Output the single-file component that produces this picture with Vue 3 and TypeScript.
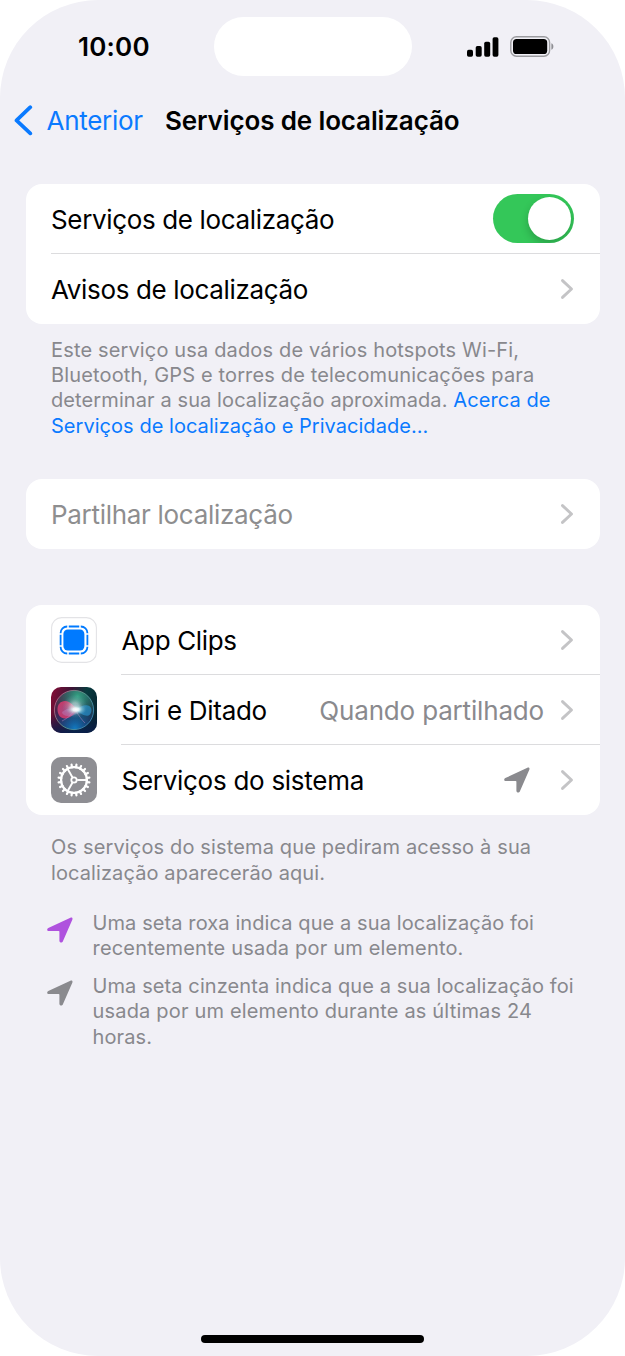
<script setup lang="ts">
interface Line {
  text: string
  wide?: boolean
}
interface Note {
  color: string
  lines: Line[]
}

const intro: string[] = [
  'Este serviço usa dados de vários hotspots Wi-Fi,',
  'Bluetooth, GPS e torres de telecomunicações para',
]

const notes: Note[] = [
  {
    color: 'purple',
    lines: [
      { text: 'Uma seta roxa indica que a sua localização foi' },
      { text: 'recentemente usada por um elemento.', wide: true },
    ],
  },
  {
    color: 'gray',
    lines: [
      { text: 'Uma seta cinzenta indica que a sua localização foi' },
      { text: 'usada por um elemento durante as últimas 24', wide: true },
      { text: 'horas.' },
    ],
  },
]

const arrowPath =
  'M1.3 11.1 23.4.7c1.5-.7 2.6.5 1.9 2L15.8 24.4c-.8 1.800-3.400 1.400-3.400-.7v-9c0-.5-.2-.7-.7-.7H2C-.1 14-.5 12 1.300 11.100z'
const teeth: number[] = Array.from({ length: 20 }, (_, i) => i * 18 + 9)
const spokes: number[] = [0, 120, 240]
</script>

<template>
  <div class="screen">
    <header class="status">
      <span class="time">10:00</span>
      <div class="island"></div>
      <div class="indicators">
        <svg class="signal" width="32" height="20" viewBox="0 0 32 20">
          <rect x="0" y="12.7" width="6" height="7" rx="1.7" />
          <rect x="8.7" y="9" width="6" height="10.7" rx="1.7" />
          <rect x="17.2" y="4.7" width="6" height="15" rx="1.7" />
          <rect x="25.6" y="0.2" width="5.8" height="19.5" rx="1.7" />
        </svg>
        <svg class="battery" width="44" height="21" viewBox="0 0 44 21">
          <rect x="0.8" y="0.8" width="38.8" height="19.4" rx="5.6" fill="none" stroke="#9b9b9f" stroke-width="1.4" />
          <rect x="3" y="3" width="34.2" height="15" rx="3.6" fill="#000" />
          <path d="M41.4 7.2c2.6.9 2.6 5.7 0 6.6z" fill="#8e8e93" />
        </svg>
      </div>
    </header>

    <nav class="nav">
      <svg class="back" width="20" height="32" viewBox="0 0 20 32">
        <path d="M17.3 2.2 3.5 15.400l13.800 13" />
      </svg>
      <span class="prev">Anterior</span>
      <h1>Serviços de localização</h1>
    </nav>

    <main>
      <section class="card">
        <div class="row">
          <span class="label">Serviços de localização</span>
          <span class="switch"><span class="knob"></span></span>
        </div>
        <div class="row divided">
          <span class="label">Avisos de localização</span>
          <svg class="chev" viewBox="0 0 14 22"><path d="m2.5 2.6 9 8.4-9 8.4" /></svg>
        </div>
      </section>
      <p class="foot intro">
        <span v-for="line in intro" :key="line" class="line medium">{{ line }}</span>
        <span class="line">determinar a sua localização aproximada. <a>Acerca de</a></span>
        <a class="line tight">Serviços de localização e Privacidade...</a>
      </p>

      <section class="card share">
        <div class="row">
          <span class="label muted">Partilhar localização</span>
          <svg class="chev" viewBox="0 0 14 22"><path d="m2.5 2.6 9 8.4-9 8.4" /></svg>
        </div>
      </section>

      <section class="card apps">
        <div class="row">
          <svg class="icon" viewBox="0 0 46 46">
            <rect x="0.6" y="0.6" width="44.8" height="44.8" rx="10" fill="#fff" stroke="#e3e3e6" stroke-width="1.1" />
            <rect x="12.4" y="12.5" width="21" height="21" rx="4.4" fill="#007aff" />
            <rect x="9.6" y="9.5" width="26.8" height="27" rx="6.5" fill="none" stroke="#007aff" stroke-width="1.8" />
            <path d="M17 8v3.200M29 8v3.200M17 35v3.200M29 35v3.200M8 17h3.200M8 29h3.200M34.800 17H38M34.800 29H38" stroke="#fff" stroke-width="1.500" />
          </svg>
          <span class="label">App Clips</span>
          <svg class="chev" viewBox="0 0 14 22"><path d="m2.5 2.6 9 8.4-9 8.4" /></svg>
        </div>
        <div class="row divided inset">
          <svg class="icon" viewBox="0 0 46 46">
            <defs>
              <linearGradient id="siriBase" x1="0" y1="0.3" x2="1" y2="0.6">
                <stop offset="0" stop-color="#7b0e35" />
                <stop offset="0.35" stop-color="#3a1536" />
                <stop offset="0.65" stop-color="#083b3e" />
                <stop offset="1" stop-color="#062330" />
              </linearGradient>
              <linearGradient id="siriShade" x1="0" y1="0" x2="0" y2="1">
                <stop offset="0.6" stop-color="#0a1c4d" stop-opacity="0" />
                <stop offset="1" stop-color="#0a1c4d" stop-opacity="0.85" />
              </linearGradient>
              <radialGradient id="siriGreen" cx="0.58" cy="0.2" r="0.58">
                <stop offset="0" stop-color="#35a283" />
                <stop offset="1" stop-color="#1b7465" stop-opacity="0" />
              </radialGradient>
              <radialGradient id="siriBlue" cx="0.52" cy="0.9" r="0.6">
                <stop offset="0" stop-color="#127ac0" />
                <stop offset="1" stop-color="#123c7b" stop-opacity="0" />
              </radialGradient>
              <radialGradient id="siriPink" cx="0.35" cy="0.5" r="0.7">
                <stop offset="0" stop-color="#bd4a83" />
                <stop offset="1" stop-color="#ea3263" />
              </radialGradient>
              <radialGradient id="siriGlow">
                <stop offset="0" stop-color="#fff" />
                <stop offset="0.3" stop-color="#f4ffff" stop-opacity="0.85" />
                <stop offset="0.6" stop-color="#c6eeee" stop-opacity="0.35" />
                <stop offset="1" stop-color="#88bbdd" stop-opacity="0" />
              </radialGradient>
              <linearGradient id="siriRing" x1="0" x2="1" y1="0.2" y2="0.8">
                <stop offset="0" stop-color="#c45b86" />
                <stop offset="0.5" stop-color="#63a394" />
                <stop offset="1" stop-color="#398bc2" />
              </linearGradient>
              <clipPath id="siriOrb"><circle cx="23" cy="23" r="19.6" /></clipPath>
            </defs>
            <rect width="46" height="46" rx="10" fill="url(#siriBase)" />
            <rect width="46" height="46" rx="10" fill="url(#siriShade)" />
            <g clip-path="url(#siriOrb)">
              <rect width="46" height="46" fill="#45305f" opacity="0.4" />
              <rect width="46" height="46" fill="url(#siriGreen)" />
              <rect width="46" height="46" fill="url(#siriBlue)" />
              <path d="M6.500 22.500c0-5 3-8.500 7.500-8.500 5 0 8 4.500 13.500 9-6 4.500-8 8.500-13.500 8.500-4.500 0-7.500-4-7.500-9z" fill="url(#siriPink)" opacity="0.85" />
              <path d="M11 25c6-5 12-4 19-1-6 4-9 6-14 5-3-.6-5-2-5-4z" fill="#b987c8" opacity="0.4" />
              <path d="M24 23c6-4 9-5.500 13-4.500 4 1.200 4.500 6 2 9-3.500 3.500-9-1-15-4.500z" fill="#2a9ad8" opacity="0.6" />
              <path d="M25 24c3 5 6 9 9 12M22 25c-4 5-7 7-11 9" stroke="#bd8bc6" stroke-width="0.9" fill="none" opacity="0.55" />
              <ellipse cx="24" cy="19.500" rx="12.500" ry="12" fill="url(#siriGlow)" opacity="0.6" />
              <ellipse cx="25" cy="22.500" rx="10" ry="5.500" fill="url(#siriGlow)" />
            </g>
            <circle cx="23" cy="23" r="19.6" fill="none" stroke="url(#siriRing)" stroke-width="1" opacity="0.85" />
          </svg>
          <span class="label">Siri e Ditado</span>
          <span class="value">Quando partilhado</span>
          <svg class="chev" viewBox="0 0 14 22"><path d="m2.5 2.6 9 8.4-9 8.4" /></svg>
        </div>
        <div class="row divided inset">
          <svg class="icon" viewBox="0 0 46 46">
            <rect width="46" height="46" rx="10" fill="#8e8e93" />
            <g fill="none" stroke="#fff">
              <circle cx="23" cy="23" r="12.9" stroke-width="2.3" />
              <path v-for="a in teeth" :key="a" d="M23 10.2V7.4" stroke-width="2.2" stroke-linecap="round" :transform="`rotate(${a} 23 23)`" />
              <circle cx="23" cy="23" r="2.7" stroke-width="1.8" />
              <path v-for="a in spokes" :key="a" d="M26.200 23h9.500" stroke-width="1.900" :transform="`rotate(${a} 23 23)`" />
            </g>
          </svg>
          <span class="label">Serviços do sistema</span>
          <svg class="arrow inrow" viewBox="0 0 26 26"><path :d="arrowPath" /></svg>
          <svg class="chev" viewBox="0 0 14 22"><path d="m2.5 2.6 9 8.4-9 8.4" /></svg>
        </div>
      </section>

      <p class="foot outro">
        <span class="line medium">Os serviços do sistema que pediram acesso à sua</span>
        <span class="line">localização aparecerão aqui.</span>
      </p>

      <ul class="notes">
        <li v-for="note in notes" :key="note.color">
          <svg class="arrow" :class="note.color" viewBox="0 0 26 26"><path :d="arrowPath" /></svg>
          <p class="foot">
            <span v-for="line in note.lines" :key="line.text" class="line" :class="{ wide: line.wide }">{{ line.text }}</span>
          </p>
        </li>
      </ul>
    </main>
    <div class="home"></div>
  </div>
</template>

<style>
body {
  margin: 0;
  background: #fff;
}
</style>

<style scoped>
* {
  box-sizing: border-box;
}
.screen {
  width: 625px;
  height: 1356px;
  display: flex;
  flex-direction: column;
  background: #f1f0f6;
  border-radius: 98px;
  overflow: hidden;
  font-family: Inter, "Liberation Sans", sans-serif;
  color: #000;
}
.status {
  height: 94px;
  display: grid;
  grid-template-columns: 213.5px 198px 1fr;
  align-items: center;
}
.time {
  padding-left: 78px;
  margin-top: -2px;
  font-size: 26px;
  font-weight: 600;
  letter-spacing: 0.2px;
}
.island {
  height: 59px;
  margin-top: -1px;
  border-radius: 30px;
  background: #fff;
}
.indicators {
  display: flex;
  align-items: center;
  padding-left: 55.5px;
  gap: 11px;
  margin-top: -1px;
}
.nav {
  height: 52px;
  display: flex;
  align-items: center;
  padding: 1px 0 0 13px;
}
.back {
  flex: none;
}
.back path {
  fill: none;
  stroke: #0a7aff;
  stroke-width: 3.7;
  stroke-linecap: round;
  stroke-linejoin: round;
}
.prev {
  flex: none;
  width: 132px;
  padding-left: 13.5px;
  font-size: 26px;
  letter-spacing: -0.3px;
  color: #0a7aff;
}
h1 {
  margin: 0;
  font-size: 26px;
  font-weight: 600;
  letter-spacing: -0.13px;
  white-space: nowrap;
}
main {
  padding: 37.5px 25.5px 0;
}
.card {
  background: #fff;
  border-radius: 16px;
}
.row {
  height: 70px;
  display: flex;
  align-items: center;
  padding: 0 25.5px;
  position: relative;
}
.row.divided::before {
  content: "";
  position: absolute;
  top: -0.5px;
  left: 25.5px;
  right: 0;
  height: 1px;
  background: #dcdcde;
}
.row.inset::before {
  left: 95.5px;
}
.label,
.value {
  font-size: 26px;
  line-height: 34px;
  white-space: nowrap;
  padding-top: 2px;
}
.label {
  letter-spacing: -0.35px;
  margin-right: auto;
}
.inset .label {
  letter-spacing: -0.28px;
}
.muted {
  color: #8e8e8f;
  letter-spacing: -0.3px;
}
.value {
  color: #8a8a8e;
  letter-spacing: -0.17px;
  margin-right: 16px;
}
.chev {
  width: 14px;
  height: 22px;
}
.chev path {
  fill: none;
  stroke: #c4c4c6;
  stroke-width: 2.9;
  stroke-linecap: round;
  stroke-linejoin: round;
}
.switch {
  width: 81px;
  height: 49px;
  padding: 3px;
  display: flex;
  justify-content: flex-end;
  border-radius: 25px;
  background: #34c759;
  overflow: hidden;
}
.knob {
  width: 43px;
  height: 43px;
  border-radius: 50%;
  background: #fff;
  box-shadow: 0 4px 9px rgba(0, 0, 0, 0.2);
}
.foot {
  margin: 0;
  font-size: 20px;
  line-height: 25.4px;
  letter-spacing: 0.1px;
  color: #88888d;
}
.line {
  display: block;
  white-space: nowrap;
}
.line.medium {
  letter-spacing: 0.15px;
}
.line.wide {
  letter-spacing: 0.18px;
}
.line.tight {
  letter-spacing: 0.04px;
}
.foot a {
  color: #0a7aff;
}
.intro {
  padding: 14px 25.5px 0;
}
.share {
  margin-top: 40px;
}
.apps {
  margin-top: 55.5px;
}
.icon {
  width: 46px;
  height: 46px;
  margin-right: 24.5px;
}
.arrow {
  width: 26px;
  height: 26px;
  flex: none;
  fill: #8a8a8e;
}
.arrow.purple {
  fill: #af52de;
}
.inrow {
  margin-right: 30px;
}
.outro {
  padding: 20.5px 25.5px 0;
}
.notes {
  list-style: none;
  margin: 25px 0 0;
  padding: 0 0 0 21px;
}
.notes li {
  display: flex;
  gap: 20px;
  margin-bottom: 12px;
}
.notes .arrow {
  margin-top: 6px;
}
.home {
  width: 223px;
  height: 8px;
  border-radius: 4px;
  background: #000;
  margin: auto auto 13px 201px;
}
</style>
